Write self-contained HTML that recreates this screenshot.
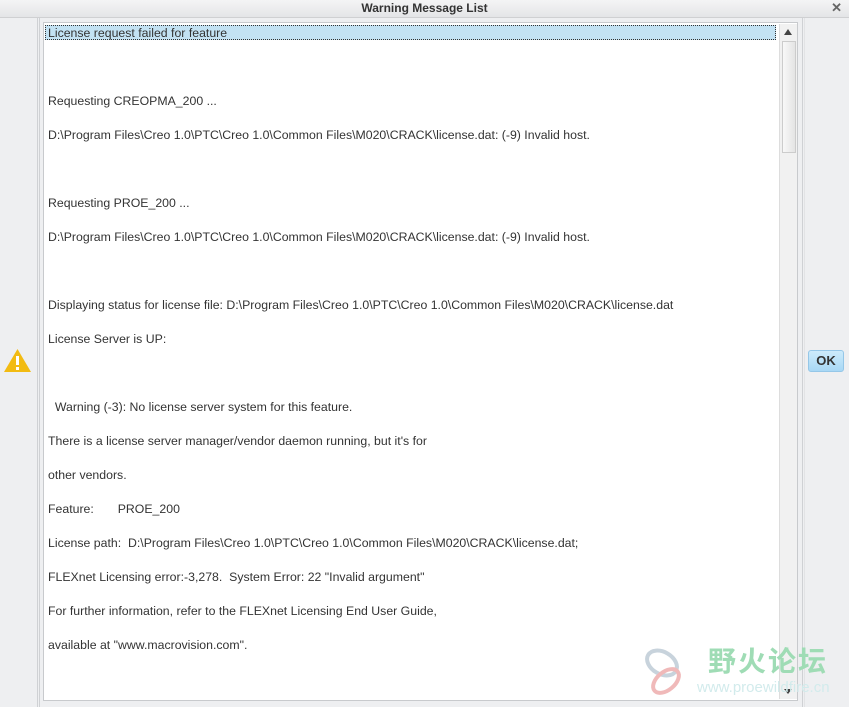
<!DOCTYPE html>
<html><head><style>
body{margin:0;width:849px;height:707px;background:#eeeff1;font-family:"Liberation Sans",Arial,sans-serif;position:relative;overflow:hidden}
.title{position:absolute;left:0;top:0;width:849px;height:17px;background:linear-gradient(#f4f4f5,#e4e5e7);border-bottom:1px solid #cfd0d2;text-align:center;font-size:12px;font-weight:bold;color:#333;line-height:16px}
.x{position:absolute;right:7px;top:0;font-size:13px;color:#666;font-weight:bold}
.vl{position:absolute;top:18px;bottom:0;width:1px;background:#cfd1d4}
.list{position:absolute;left:43px;top:22px;width:753px;height:677px;background:#fff;border:1px solid #c8cacd}
.t{position:absolute;left:4px;font-size:12.3px;color:#333;white-space:pre;line-height:14px}
.sel{position:absolute;left:1px;top:2px;width:731px;height:15px;background:#c3e2f3;border:1px dotted #333;box-sizing:border-box}
.sb{position:absolute;left:735px;top:1px;width:17px;height:675px;background:#f1f1f1;border-left:1px solid #ddd}
.thumb{position:absolute;left:2px;top:17px;width:12px;height:110px;background:linear-gradient(90deg,#f8f8f8,#e4e4e4);border:1px solid #ccc}
.ok{position:absolute;left:808px;top:350px;width:36px;height:22px;border-radius:3px;background:linear-gradient(#cdebfb,#a8d8f5);border:1px solid #95c7e8;box-sizing:border-box;font-size:13px;font-weight:bold;color:#333;text-align:center;line-height:20px}
</style></head><body>
<div class="title">Warning Message List<span class="x">✕</span></div>
<div class="vl" style="left:37px"></div><div class="vl" style="left:39px"></div>
<div class="vl" style="left:802px"></div><div class="vl" style="left:804px;background:#e2e3e5"></div>
<svg style="position:absolute;left:3px;top:348px" width="29" height="25"><polygon points="14.5,1 28,24 1,24" fill="#f2bb12"/><rect x="13" y="8" width="3" height="9" fill="#fff"/><rect x="13" y="19" width="3" height="3" fill="#fff"/></svg>
<div class="ok">OK</div>
<div class="list">
<div class="sel"></div>
<div class="t" style="top:3px">License request failed for feature</div>
<div class="t" style="top:71px">Requesting CREOPMA_200 ...</div>
<div class="t" style="top:105px">D:\Program Files\Creo 1.0\PTC\Creo 1.0\Common Files\M020\CRACK\license.dat: (-9) Invalid host.</div>
<div class="t" style="top:173px">Requesting PROE_200 ...</div>
<div class="t" style="top:207px">D:\Program Files\Creo 1.0\PTC\Creo 1.0\Common Files\M020\CRACK\license.dat: (-9) Invalid host.</div>
<div class="t" style="top:275px">Displaying status for license file: D:\Program Files\Creo 1.0\PTC\Creo 1.0\Common Files\M020\CRACK\license.dat</div>
<div class="t" style="top:309px">License Server is UP:</div>
<div class="t" style="top:377px">  Warning (-3): No license server system for this feature.</div>
<div class="t" style="top:411px">There is a license server manager/vendor daemon running, but it's for</div>
<div class="t" style="top:445px">other vendors.</div>
<div class="t" style="top:479px">Feature:       PROE_200</div>
<div class="t" style="top:513px">License path:  D:\Program Files\Creo 1.0\PTC\Creo 1.0\Common Files\M020\CRACK\license.dat;</div>
<div class="t" style="top:547px">FLEXnet Licensing error:-3,278.  System Error: 22 "Invalid argument"</div>
<div class="t" style="top:581px">For further information, refer to the FLEXnet Licensing End User Guide,</div>
<div class="t" style="top:615px">available at "www.macrovision.com".</div>
<div class="sb"><div style="position:absolute;left:4px;top:5px;width:0;height:0;border:4px solid transparent;border-bottom:6px solid #444;border-top:0"></div><div class="thumb"></div><div style="position:absolute;left:4px;bottom:5px;border:4px solid transparent;border-top:5px solid #444;border-bottom:0"></div></div>
</div>
<div style="position:absolute;left:708px;top:640px;font-family:'Noto Sans CJK SC',sans-serif;font-size:28px;font-weight:bold;color:#9fdcb5;letter-spacing:2px">野火论坛</div>
<div style="position:absolute;left:697px;top:679px;font-size:15px;color:#d2ebec">www.proewildfire.cn</div>
<svg style="position:absolute;left:640px;top:643px" width="55" height="55"><ellipse cx="22" cy="20" rx="16" ry="11" fill="none" stroke="#c8d3dc" stroke-width="4" transform="rotate(30 22 20)"/><ellipse cx="26" cy="38" rx="15" ry="9" fill="none" stroke="#f0b9b9" stroke-width="4" transform="rotate(-40 26 38)"/></svg>
</body></html>
